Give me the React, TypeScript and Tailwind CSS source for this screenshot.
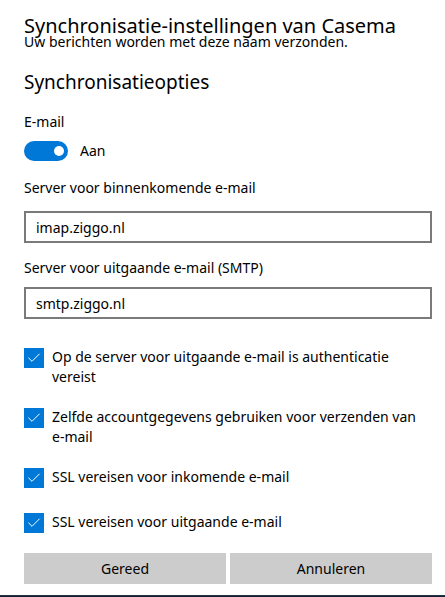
import type { ReactNode } from 'react'
import { Check } from 'lucide-react'

const font = { fontFamily: '"Noto Sans", "Open Sans", sans-serif' }

function Toggle({ label }: { label: string }) {
  return (
    <div className="flex items-center gap-3 mt-[9px]">
      <div className="w-[44px] h-[20px] rounded-full bg-[#0078d7] flex items-center justify-end pr-[4px]">
        <div className="w-[10px] h-[10px] rounded-full bg-white" />
      </div>
      <span className="text-[14px] leading-[20px] text-black">{label}</span>
    </div>
  )
}

function TextField({ value }: { value: string }) {
  return (
    <div className="h-[32px] border-2 border-[#7a7a7a] flex items-center px-[10px] text-[14px] text-black">
      {value}
    </div>
  )
}

function CheckRow({ children, className }: { children: ReactNode; className?: string }) {
  return (
    <div className={'flex items-start gap-[8px] ' + (className ?? '')}>
      <div className="w-[20px] h-[20px] shrink-0 bg-[#0078d7] flex items-center justify-center">
        <Check size={16} strokeWidth={1.5} color="white" />
      </div>
      <span className="text-[14px] leading-[20px] text-black -mt-[1px]">{children}</span>
    </div>
  )
}

export default function App() {
  return (
    <div className="w-[445px] h-[597px] bg-white flex flex-col overflow-hidden" style={font}>
      <div className="pl-6 pr-[13px] pt-[14px] flex flex-col flex-1">
        <h1 className="text-[20px] leading-[24px] text-black relative z-10">
          Synchronisatie-instellingen van Casema
        </h1>
        <p className="text-[14px] leading-[16px] text-black -mt-[4px]">
          Uw berichten worden met deze naam verzonden.
        </p>
        <h2 className="text-[19px] leading-[24px] text-black mt-[20px]">Synchronisatieopties</h2>

        <div className="text-[14px] leading-[20px] text-black mt-[18px]">E-mail</div>
        <Toggle label="Aan" />

        <div className="text-[14px] leading-[20px] text-black mt-[17px]">
          Server voor binnenkomende e-mail
        </div>
        <div className="mt-[13px]">
          <TextField value="imap.ziggo.nl" />
        </div>

        <div className="text-[14px] leading-[20px] text-black mt-[15px]">
          Server voor uitgaande e-mail (SMTP)
        </div>
        <div className="mt-[9px]">
          <TextField value="smtp.ziggo.nl" />
        </div>

        <CheckRow className="mt-[29px]">
          Op de server voor uitgaande e-mail is authenticatie vereist
        </CheckRow>
        <CheckRow className="mt-[21px]">
          Zelfde accountgegevens gebruiken voor verzenden van{' '}
          <span className="whitespace-nowrap">e-mail</span>
        </CheckRow>
        <CheckRow className="mt-[21px]">SSL vereisen voor inkomende e-mail</CheckRow>
        <CheckRow className="mt-[25px]">SSL vereisen voor uitgaande e-mail</CheckRow>

        <div className="grid grid-cols-2 gap-[4px] mt-[20px]">
          <button className="h-[31px] bg-[#cccccc] text-[14px] text-black">Gereed</button>
          <button className="h-[31px] bg-[#cccccc] text-[14px] text-black">Annuleren</button>
        </div>
      </div>
      <div className="h-[2px] bg-gradient-to-b from-[#2a3a4a] to-[#0e1a28]" />
    </div>
  )
}
